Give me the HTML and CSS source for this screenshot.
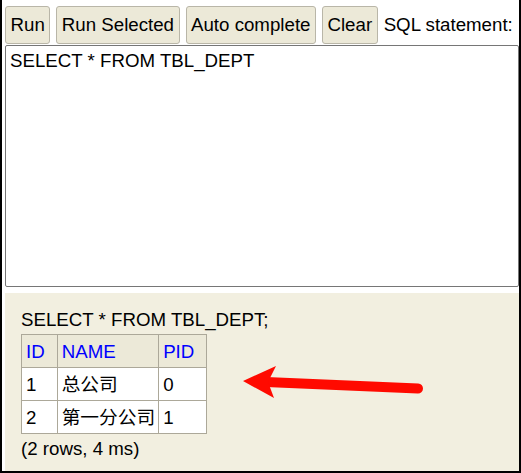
FILE: index.html
```html
<!DOCTYPE html>
<html>
<head>
<meta charset="utf-8">
<link rel="stylesheet" href="styles.css">
</head>
<body>
<div class="frame">
  <div class="toolbar">
    <button class="btn">Run</button>
    <button class="btn">Run Selected</button>
    <button class="btn">Auto complete</button>
    <button class="btn">Clear</button>
    <span class="label">SQL statement:</span>
  </div>
  <textarea class="sql">SELECT * FROM TBL_DEPT</textarea>
  <div class="result">
    <div class="stmt">SELECT * FROM TBL_DEPT;</div>
    <table class="grid">
      <tr><th>ID</th><th>NAME</th><th>PID</th></tr>
      <tr><td>1</td><td>总公司</td><td>0</td></tr>
      <tr><td>2</td><td>第一分公司</td><td>1</td></tr>
    </table>
    <div class="summary">(2 rows, 4 ms)</div>
  </div>
  <svg class="arrow" width="190" height="50" viewBox="236 358 190 50" xmlns="http://www.w3.org/2000/svg">
    <line x1="266" y1="382" x2="418" y2="388.5" stroke="#ff0a00" stroke-width="10" stroke-linecap="round"/>
    <polygon points="243,381 276,366 268,382 274,398" fill="#ff0a00"/>
  </svg>
</div>
</body>
</html>
```

FILE: styles.css
```css
html, body {
  margin: 0;
  padding: 0;
  background: #ffffff;
}

.frame {
  position: relative;
  width: 521px;
  height: 473px;
  box-sizing: border-box;
  border: 2px solid #000000;
  border-top: none;
  font-family: "Liberation Sans", Arial, "Noto Sans CJK SC", sans-serif;
  font-size: 18.7px;
  color: #000000;
  overflow: hidden;
}

.toolbar {
  display: flex;
  align-items: center;
  gap: 6px;
  padding: 6px 0 1px 3px;
  white-space: nowrap;
}

.btn {
  font-family: "Liberation Sans", Arial, sans-serif;
  font-size: 18.7px;
  line-height: 20px;
  padding: 8px 4.5px;
  margin: 0;
  border: 1px solid #b9b6a8;
  border-radius: 3px;
  background: #ece9d8;
  color: #000000;
}

.label {
  line-height: 20px;
}

.sql {
  display: block;
  box-sizing: border-box;
  width: 514px;
  height: 242px;
  margin: 0 0 0 3px;
  padding: 4px 4px;
  border: 1px solid #767676;
  border-radius: 2px;
  font-family: "Liberation Sans", Arial, sans-serif;
  font-size: 18.7px;
  line-height: 21px;
  resize: none;
  color: #000000;
  background: #ffffff;
}

.result {
  margin: 6px 0 0 3px;
  height: 178px;
  box-sizing: border-box;
  padding: 16px 16px 0 16px;
  background: #f2efe0;
}

.stmt {
  line-height: 21px;
  margin-bottom: 4px;
}

.grid {
  border-collapse: collapse;
  font-family: "Liberation Sans", Arial, "Noto Sans CJK SC", sans-serif;
  font-size: 18.7px;
}

.grid th,
.grid td {
  border: 1px solid #aca899;
  line-height: 21px;
  padding: 6px 3px 5px 4px;
  text-align: left;
  font-weight: normal;
  white-space: nowrap;
}

.grid th {
  background: #ece9d8;
  color: #0000ff;
  padding-right: 12px;
}

.grid td {
  background: #ffffff;
}

.summary {
  line-height: 21px;
  margin-top: 4px;
}

.arrow {
  position: absolute;
  left: 234px;
  top: 358px;
  pointer-events: none;
}
```
